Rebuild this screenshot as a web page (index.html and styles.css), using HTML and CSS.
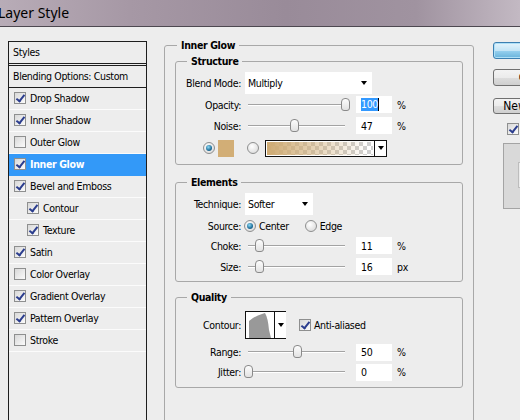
FILE: index.html
```html
<!DOCTYPE html>
<html lang="en">
<head>
    <meta charset="UTF-8">
    <meta name="viewport" content="width=device-width, initial-scale=1.0">
    <title>Layer Style</title>
    <link rel="stylesheet" href="styles.css">
</head>
<body>

<div class="titlebar">Layer Style</div>

<div class="dialog">
    <!-- Style list on the left -->
    <ul class="styles-list">
        <li class="list-head">Styles</li>
        <li class="list-blend">Blending Options: Custom</li>
        <li><span class="cb on"></span>Drop Shadow</li>
        <li><span class="cb on"></span>Inner Shadow</li>
        <li><span class="cb"></span>Outer Glow</li>
        <li class="active"><span class="cb on"></span>Inner Glow</li>
        <li><span class="cb on"></span>Bevel and Emboss</li>
        <li class="sub"><span class="cb on"></span>Contour</li>
        <li class="sub"><span class="cb on"></span>Texture</li>
        <li><span class="cb on"></span>Satin</li>
        <li><span class="cb"></span>Color Overlay</li>
        <li><span class="cb on"></span>Gradient Overlay</li>
        <li><span class="cb on"></span>Pattern Overlay</li>
        <li><span class="cb"></span>Stroke</li>
    </ul>

    <fieldset class="group">
        <legend>Inner Glow</legend>

        <fieldset class="section structure">
            <legend>Structure</legend>
            <div class="row row-select">
                <label>Blend Mode:</label>
                <div class="select select-wide">Multiply<span class="caret"></span></div>
            </div>
            <div class="row row-slider">
                <label>Opacity:</label>
                <div class="slider"><span class="thumb" style="left: 100%"></span></div>
                <div class="field"><span class="sel">100</span></div>
                <span class="unit">%</span>
            </div>
            <div class="row row-slider">
                <label>Noise:</label>
                <div class="slider"><span class="thumb" style="left: 47%"></span></div>
                <div class="field">47</div>
                <span class="unit">%</span>
            </div>
            <div class="row row-color">
                <span class="radio on"></span>
                <span class="swatch"></span>
                <span class="radio radio-gap"></span>
                <div class="gradient-pick">
                    <span class="gradient"></span>
                    <span class="drop"><span class="caret"></span></span>
                </div>
            </div>
        </fieldset>

        <fieldset class="section elements">
            <legend>Elements</legend>
            <div class="row row-select">
                <label>Technique:</label>
                <div class="select select-short">Softer<span class="caret"></span></div>
            </div>
            <div class="row row-source">
                <label>Source:</label>
                <span class="opt"><span class="radio on"></span>Center</span>
                <span class="opt"><span class="radio"></span>Edge</span>
            </div>
            <div class="row row-slider">
                <label>Choke:</label>
                <div class="slider"><span class="thumb" style="left: 11%"></span></div>
                <div class="field">11</div>
                <span class="unit">%</span>
            </div>
            <div class="row row-slider">
                <label>Size:</label>
                <div class="slider"><span class="thumb" style="left: 11%"></span></div>
                <div class="field">16</div>
                <span class="unit">px</span>
            </div>
        </fieldset>

        <fieldset class="section quality">
            <legend>Quality</legend>
            <div class="row row-contour">
                <label>Contour:</label>
                <div class="contour-pick">
                    <svg viewBox="0 0 28 26" width="28" height="26">
                        <path d="M3 26 L3 9 Q9 4 16 2 L19 1 Q22 6 23 18 L25 26 Z" fill="#999"/>
                    </svg>
                    <span class="drop"><span class="caret"></span></span>
                </div>
                <span class="opt check-opt"><span class="cb on"></span>Anti-aliased</span>
            </div>
            <div class="row row-slider">
                <label>Range:</label>
                <div class="slider"><span class="thumb" style="left: 50%"></span></div>
                <div class="field">50</div>
                <span class="unit">%</span>
            </div>
            <div class="row row-slider">
                <label>Jitter:</label>
                <div class="slider"><span class="thumb" style="left: 0%"></span></div>
                <div class="field">0</div>
                <span class="unit">%</span>
            </div>
        </fieldset>
    </fieldset>

    <!-- Dialog buttons -->
    <div class="side">
        <button class="btn btn-default">OK</button>
        <button class="btn btn-cancel">Cancel</button>
        <button class="btn btn-new">New Style...</button>
        <span class="opt preview-opt"><span class="cb on"></span>Preview</span>
        <div class="preview-box"><div class="preview-swatch"></div></div>
    </div>
</div>

</body>
</html>
```

FILE: styles.css
```css
* {
    box-sizing: border-box;
}
body {
    margin: 0;
    width: 520px;
    height: 420px;
    overflow: hidden;
    background-color: #ededed;
    font-family: "DejaVu Sans Condensed", "DejaVu Sans", sans-serif;
    font-size: 10.5px;
    letter-spacing: -0.35px;
    color: #000;
}
.titlebar {
    height: 27px;
    border-bottom: 1px solid #4d4850;
    background: linear-gradient(90deg, #b8acb7 0%, #a698a5 25%, #998b99 55%, #a093a0 80%, #c3b9c3 100%);
    font-family: "Noto Sans", sans-serif;
    font-size: 14px;
    letter-spacing: 0;
    line-height: 26px;
    text-indent: -2px;
    white-space: nowrap;
}
.dialog {
    display: flex;
    align-items: flex-start;
}

/* left list */
.styles-list {
    list-style: none;
    margin: 14px 0 0 8px;
    padding: 0;
    width: 139px;
    height: 400px;
    border: 1px solid #1e1e1e;
    flex-shrink: 0;
}
.styles-list li {
    height: 22px;
    border-bottom: 1px solid #fbfbfb;
    display: flex;
    align-items: center;
    padding: 0 0 1px 5px;
    white-space: nowrap;
}
.styles-list li.list-head {
    height: 24px;
    border-bottom: 3px double #1e1e1e;
    padding-left: 4px;
}
.styles-list li.list-blend {
    border-bottom-color: #1e1e1e;
    padding-left: 4px;
}
.styles-list li.sub {
    padding-left: 18px;
}
.styles-list li.active {
    background-color: #3399f8;
    border-bottom-color: #3399f8;
    color: #fff;
    font-weight: bold;
}
.styles-list .cb {
    margin-right: 4px;
}

/* checkbox and radio */
.cb {
    position: relative;
    width: 12px;
    height: 12px;
    border: 1px solid #8e8f8f;
    background: linear-gradient(135deg, #d8d8d8, #fbfbfb);
    flex-shrink: 0;
}
.cb.on::after {
    content: "";
    position: absolute;
    left: 3px;
    top: 0;
    width: 3px;
    height: 7px;
    border: solid #2b3d8e;
    border-width: 0 2px 2px 0;
    transform: rotate(38deg);
}
.radio {
    position: relative;
    width: 12px;
    height: 12px;
    border-radius: 50%;
    border: 1px solid #8e8f8f;
    background: radial-gradient(circle at 40% 35%, #fff, #d4d4d4);
    flex-shrink: 0;
}
.radio.on::after {
    content: "";
    position: absolute;
    left: 2px;
    top: 2px;
    right: 2px;
    bottom: 2px;
    border-radius: 50%;
    background: radial-gradient(circle at 40% 35%, #8fdaf5, #1f6f9a 60%, #134b6b);
}

/* settings panel */
fieldset {
    margin: 0;
    border: 1px solid #a8a8a8;
    border-radius: 3px;
}
legend {
    font-weight: bold;
    padding: 0 4px;
    line-height: 13px;
}
.group {
    margin: 12px 0 0 17px;
    width: 310px;
    height: 400px;
    padding: 0 10px;
    flex-shrink: 0;
}
.group > legend {
    margin-left: 2px;
}
.section {
    padding: 0;
}
.section > legend {
    margin-left: 11px;
}
.structure {
    margin-top: 3px;
    padding-bottom: 7px;
}
.elements {
    margin-top: 11px;
    padding-bottom: 4px;
}
.quality {
    margin-top: 9px;
    padding-bottom: 5px;
}

.row {
    display: flex;
    align-items: center;
    white-space: nowrap;
}
.row label {
    width: 65px;
    margin-right: 4px;
    text-align: right;
    flex-shrink: 0;
}
.row-select {
    height: 22px;
    margin-top: 4px;
}
.select {
    height: 22px;
    background: #fff;
    display: flex;
    align-items: center;
    justify-content: space-between;
    padding: 0 5px 0 3px;
}
.select-wide {
    width: 127px;
}
.select-short {
    width: 68px;
}
.caret {
    width: 0;
    height: 0;
    border-left: 3.5px solid transparent;
    border-right: 3.5px solid transparent;
    border-top: 4px solid #000;
}

.row-slider {
    height: 21px;
}
.quality .row-slider {
    height: 20px;
}
.slider {
    position: relative;
    width: 97px;
    height: 2px;
    margin-left: 3px;
    border-top: 1px solid #a3a3a3;
    border-bottom: 1px solid #fff;
}
.thumb {
    position: absolute;
    top: -7px;
    width: 9px;
    height: 13px;
    margin-left: -4px;
    border: 1px solid #8a8a8a;
    border-radius: 4px 4px 3px 3px;
    background: linear-gradient(#fdfdfd, #e2e2e2);
}
.field {
    width: 36px;
    height: 17px;
    margin-left: 11px;
    padding-left: 5px;
    background: #fff;
    display: flex;
    align-items: center;
}
.sel {
    background: #3399ff;
    color: #fff;
    border-right: 1px solid #000;
    line-height: 13px;
}
.unit {
    margin-left: 5px;
}

.row-color {
    height: 18px;
    margin-top: 3px;
    padding-left: 27px;
}
.swatch {
    width: 16px;
    height: 17px;
    margin-left: 3px;
    background: #d2ae76;
}
.radio-gap {
    margin-left: 13px;
}
.gradient-pick {
    display: flex;
    width: 122px;
    height: 17px;
    margin-left: 6px;
    border: 1px solid #111;
    background: #fff;
}
.gradient {
    flex: 1;
    margin: 1px;
    background: linear-gradient(90deg, #cfab73, rgba(207, 171, 115, 0) 95%),
        repeating-conic-gradient(#cfcfcf 0 25%, #fff 0 50%) 0 0 / 8px 8px;
}
.drop {
    width: 12px;
    border-left: 1px solid #111;
    background: #fff;
    display: flex;
    align-items: center;
    justify-content: center;
    flex-shrink: 0;
}

.row-source {
    height: 19px;
    margin-top: 1px;
}
.opt {
    display: flex;
    align-items: center;
    gap: 3px;
}
.row-source .opt:first-of-type {
    margin-left: -1px;
}
.opt + .opt {
    margin-left: 16px;
}

.row-contour {
    height: 28px;
    margin-top: 7px;
}
.contour-pick {
    display: flex;
    width: 41px;
    height: 28px;
    border: 1px solid #111;
    background: #fff;
}
.contour-pick svg {
    flex-shrink: 0;
}
.check-opt {
    margin-left: 13px;
}
.quality .row-contour + .row-slider {
    margin-top: 3px;
}

/* right column */
.side {
    margin: 15px 0 0 19px;
    width: 85px;
    flex-shrink: 0;
    display: flex;
    flex-direction: column;
    align-items: flex-start;
}
.btn {
    width: 85px;
    height: 17px;
    padding: 0;
    border: 1px solid #707070;
    border-radius: 3px;
    background: linear-gradient(#f3f3f3 0%, #ebebeb 50%, #dddddd 51%, #cfcfcf 100%);
    font-family: "DejaVu Sans Condensed", "DejaVu Sans", sans-serif;
    font-size: 11px;
    color: #000;
}
.btn-default {
    border-color: #3c7fb1;
    background: linear-gradient(#e5f4fc, #c4e5f6 50%, #98d1ef 51%, #68b3db);
    box-shadow: inset 0 0 0 1px #aee0f7;
}
.btn-cancel {
    margin-top: 10px;
}
.btn-new {
    margin-top: 12px;
    height: 16px;
    font-size: 12px;
    line-height: 12px;
}
.preview-opt {
    margin: 9px 0 0 14px;
}
.preview-box {
    margin: 8px 0 0 10px;
    width: 70px;
    height: 66px;
    border: 1px solid #a4a4a4;
    background: #d9d9d9;
    padding: 18px 0 0 14px;
}
.preview-swatch {
    width: 40px;
    height: 26px;
    border: 1px solid #bdbdbd;
    background: #ececec;
}
```
